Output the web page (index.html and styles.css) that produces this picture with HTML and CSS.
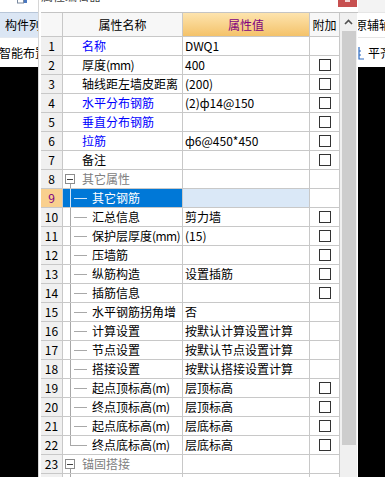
FILE: index.html
```html
<!DOCTYPE html>
<html lang="zh-CN">
<head>
  <meta charset="UTF-8">
  <meta name="viewport" content="width=device-width, initial-scale=1.0">
  <title>属性编辑器</title>
  <link rel="stylesheet" href="styles.css">
</head>
<body>
  <div class="screen">
    <!-- 左侧：主程序的构件列表面板 -->
    <div class="side side-left">
      <div class="strip-top">
        <svg class="mini-ico" width="10" height="4" viewBox="0 0 10 4"><rect x="0.5" y="-3" width="6" height="6" fill="none" stroke="#7a8aa0"/><rect x="7" y="0" width="3" height="3" fill="#4a78c0"/></svg>
      </div>
      <div class="tab">构件列表</div>
      <div class="tool tool-left">智能布置</div>
      <div class="void"></div>
    </div>

    <!-- 属性编辑器 -->
    <div class="dialog">
      <div class="titlebar">
        <span class="title">属性编辑器</span>
        <span class="close"><i></i></span>
      </div>
      <div class="dlg-body">
        <div class="grid">
          <div class="row head">
            <div class="c-no"></div>
            <div class="c-name">属性名称</div>
            <div class="c-val">属性值</div>
            <div class="c-add">附加</div>
          </div>

          <div class="row">
            <div class="c-no">1</div>
            <div class="c-name blue">名称</div>
            <div class="c-val">DWQ1</div>
            <div class="c-add"></div>
          </div>
          <div class="row">
            <div class="c-no">2</div>
            <div class="c-name">厚度<span class="unit">(mm)</span></div>
            <div class="c-val">400</div>
            <div class="c-add"><span class="cb"></span></div>
          </div>
          <div class="row">
            <div class="c-no">3</div>
            <div class="c-name">轴线距左墙皮距离</div>
            <div class="c-val">(200)</div>
            <div class="c-add"><span class="cb"></span></div>
          </div>
          <div class="row">
            <div class="c-no">4</div>
            <div class="c-name blue">水平分布钢筋</div>
            <div class="c-val">(2)ф14@150</div>
            <div class="c-add"><span class="cb"></span></div>
          </div>
          <div class="row">
            <div class="c-no">5</div>
            <div class="c-name blue">垂直分布钢筋</div>
            <div class="c-val"></div>
            <div class="c-add"><span class="cb"></span></div>
          </div>
          <div class="row">
            <div class="c-no">6</div>
            <div class="c-name blue">拉筋</div>
            <div class="c-val">ф6@450*450</div>
            <div class="c-add"><span class="cb"></span></div>
          </div>
          <div class="row">
            <div class="c-no">7</div>
            <div class="c-name">备注</div>
            <div class="c-val"></div>
            <div class="c-add"><span class="cb"></span></div>
          </div>
          <div class="row group">
            <div class="c-no">8</div>
            <div class="c-name"><span class="fold"></span>其它属性</div>
            <div class="c-val"></div>
            <div class="c-add"></div>
          </div>
          <div class="row sel">
            <div class="c-no">9</div>
            <div class="c-name"><span class="twig"></span>其它钢筋</div>
            <div class="c-val"></div>
            <div class="c-add"></div>
          </div>
          <div class="row">
            <div class="c-no">10</div>
            <div class="c-name"><span class="twig"></span>汇总信息</div>
            <div class="c-val">剪力墙</div>
            <div class="c-add"><span class="cb"></span></div>
          </div>
          <div class="row">
            <div class="c-no">11</div>
            <div class="c-name"><span class="twig"></span>保护层厚度<span class="unit">(mm)</span></div>
            <div class="c-val">(15)</div>
            <div class="c-add"><span class="cb"></span></div>
          </div>
          <div class="row">
            <div class="c-no">12</div>
            <div class="c-name"><span class="twig"></span>压墙筋</div>
            <div class="c-val"></div>
            <div class="c-add"><span class="cb"></span></div>
          </div>
          <div class="row">
            <div class="c-no">13</div>
            <div class="c-name"><span class="twig"></span>纵筋构造</div>
            <div class="c-val">设置插筋</div>
            <div class="c-add"><span class="cb"></span></div>
          </div>
          <div class="row">
            <div class="c-no">14</div>
            <div class="c-name"><span class="twig"></span>插筋信息</div>
            <div class="c-val"></div>
            <div class="c-add"><span class="cb"></span></div>
          </div>
          <div class="row">
            <div class="c-no">15</div>
            <div class="c-name"><span class="twig"></span>水平钢筋拐角增</div>
            <div class="c-val">否</div>
            <div class="c-add"></div>
          </div>
          <div class="row">
            <div class="c-no">16</div>
            <div class="c-name"><span class="twig"></span>计算设置</div>
            <div class="c-val">按默认计算设置计算</div>
            <div class="c-add"></div>
          </div>
          <div class="row">
            <div class="c-no">17</div>
            <div class="c-name"><span class="twig"></span>节点设置</div>
            <div class="c-val">按默认节点设置计算</div>
            <div class="c-add"></div>
          </div>
          <div class="row">
            <div class="c-no">18</div>
            <div class="c-name"><span class="twig"></span>搭接设置</div>
            <div class="c-val">按默认搭接设置计算</div>
            <div class="c-add"></div>
          </div>
          <div class="row">
            <div class="c-no">19</div>
            <div class="c-name"><span class="twig"></span>起点顶标高<span class="unit">(m)</span></div>
            <div class="c-val">层顶标高</div>
            <div class="c-add"><span class="cb"></span></div>
          </div>
          <div class="row">
            <div class="c-no">20</div>
            <div class="c-name"><span class="twig"></span>终点顶标高<span class="unit">(m)</span></div>
            <div class="c-val">层顶标高</div>
            <div class="c-add"><span class="cb"></span></div>
          </div>
          <div class="row">
            <div class="c-no">21</div>
            <div class="c-name"><span class="twig"></span>起点底标高<span class="unit">(m)</span></div>
            <div class="c-val">层底标高</div>
            <div class="c-add"><span class="cb"></span></div>
          </div>
          <div class="row">
            <div class="c-no">22</div>
            <div class="c-name"><span class="twig last"></span>终点底标高<span class="unit">(m)</span></div>
            <div class="c-val">层底标高</div>
            <div class="c-add"><span class="cb"></span></div>
          </div>
          <div class="row group">
            <div class="c-no">23</div>
            <div class="c-name"><span class="fold"></span>锚固搭接</div>
            <div class="c-val"></div>
            <div class="c-add"></div>
          </div>
          <div class="row">
            <div class="c-no">24</div>
            <div class="c-name"><span class="twig"></span>混凝土强度等级</div>
            <div class="c-val">(C30)</div>
            <div class="c-add"><span class="cb"></span></div>
          </div>
        </div>

        <div class="vscroll">
          <div class="up">
            <svg width="9" height="6" viewBox="0 0 9 6"><path d="M1 5 L4.5 1.5 L8 5" fill="none" stroke="#505050" stroke-width="1.6"/></svg>
          </div>
          <div class="thumb"></div>
        </div>
      </div>
    </div>

    <!-- 右侧：主程序工具栏 -->
    <div class="side side-right">
      <div class="strip-top strip-gray"></div>
      <div class="tab tab-plain">原辅轴线</div>
      <div class="tool">
        <svg class="ruler" width="6" height="14" viewBox="0 0 6 14"><path d="M1 1 V13 H6 M1 9 H3 M1 5 H3" fill="none" stroke="#2c6ac0" stroke-width="1.2"/></svg>
        <span>平齐板顶</span>
      </div>
      <div class="void"></div>
    </div>
  </div>
</body>
</html>
```

FILE: styles.css
```css
html,
body {
  margin: 0;
  padding: 0;
}
body {
  width: 385px;
  height: 477px;
  overflow: hidden;
  background: #000;
  font-family: "Noto Sans CJK SC", "Noto Sans", sans-serif;
  font-size: 12px;
  color: #000;
}
.screen {
  display: flex;
  height: 477px;
}

/* 两侧被遮住的主窗口 */
.side {
  display: flex;
  flex-direction: column;
  overflow: hidden;
  white-space: nowrap;
}
.side-left {
  width: 38px;
}
.side-right {
  width: 27px;
}
.strip-top {
  height: 12px;
  background: #fff;
  overflow: hidden;
}
.strip-gray {
  background: #f3f3f3;
}
.mini-ico {
  display: block;
  margin-left: 17px;
}
.tab {
  height: 26px;
  box-sizing: border-box;
  line-height: 24px;
  padding-left: 5px;
  background: #dbe6f4;
  border-top: 1px solid #b8c6d8;
  border-bottom: 1px solid #e4e9f0;
}
.tab-plain {
  background: #fff;
  border-top: 1px solid #e6e6e6;
  border-bottom: 1px solid #e6e6e6;
  padding-left: 0;
  text-indent: -3px;
}
.tool {
  display: flex;
  align-items: center;
  height: 29px;
  background: #fff;
}
.tool-left {
  padding-left: 0;
  text-indent: -1px;
}
.ruler {
  flex-shrink: 0;
  margin: 0 4px 0 0;
}
.void {
  flex: 1;
  background: #000;
}

/* 对话框 */
.dialog {
  display: flex;
  flex-direction: column;
  width: 320px;
  box-sizing: border-box;
  padding-left: 2px;
  background: #fff;
  border-left: 1px solid #d6d6d6;
}
.titlebar {
  display: flex;
  justify-content: space-between;
  height: 12px;
  overflow: hidden;
  background: #fff;
}
.title {
  margin-top: -11px;
  line-height: 14px;
  color: #444;
}
.close {
  display: flex;
  justify-content: center;
  width: 19px;
  height: 7px;
  margin-right: 1px;
  background: #c75050;
}
.close i {
  width: 5px;
  height: 2px;
  background: #f3d6d6;
}
.dlg-body {
  display: flex;
  flex: 1;
  border-top: 1px solid #c4c4c4;
  overflow: hidden;
}
.grid {
  width: 299px;
  flex-shrink: 0;
}
.row {
  display: flex;
  height: 19px;
  box-sizing: border-box;
  border-bottom: 1px solid #c8c8c8;
  line-height: 18px;
}
.row > div {
  box-sizing: border-box;
  border-right: 1px solid #c8c8c8;
  white-space: nowrap;
  overflow: hidden;
}
.c-no {
  width: 22px;
  text-align: center;
  background: #f0f0f0;
}
.c-name {
  display: flex;
  align-items: center;
  width: 120px;
  padding-left: 19px;
}
.c-val {
  width: 127px;
  padding-left: 2px;
}
.c-add {
  display: flex;
  align-items: center;
  justify-content: center;
  width: 30px;
}
.blue {
  color: #0000ff;
}
.unit {
  letter-spacing: -0.6px;
}

/* 表头 */
.row.head {
  height: 24px;
  line-height: 23px;
}
.row.head > div {
  background: #f7f7f7;
  justify-content: center;
  padding-left: 0;
  text-align: center;
}
.row.head > .c-val {
  background: linear-gradient(#fde4ae, #f4c26a);
  color: #800080;
}

/* 树形分组 */
.row.group .c-name {
  padding-left: 2px;
  color: #808080;
  background: linear-gradient(#a0a0a0, #a0a0a0) 7px 14px / 1px 4px no-repeat;
}
.fold {
  width: 10px;
  height: 10px;
  box-sizing: border-box;
  margin-right: 7px;
  border: 1px solid #8c8c8c;
  background: linear-gradient(#404040, #404040) center / 6px 1px no-repeat #fff;
  flex-shrink: 0;
}
.row .c-name:has(.twig) {
  padding-left: 7px;
}
.twig {
  flex-shrink: 0;
  width: 17px;
  height: 18px;
  margin-right: 5px;
  background:
    linear-gradient(#a8a8a8, #a8a8a8) 0 0 / 1px 18px no-repeat,
    linear-gradient(#a8a8a8, #a8a8a8) 4px 9px / 13px 1px no-repeat;
}
.twig.last {
  background:
    linear-gradient(#a8a8a8, #a8a8a8) 0 0 / 1px 10px no-repeat,
    linear-gradient(#a8a8a8, #a8a8a8) 0 9px / 17px 1px no-repeat;
}

/* 选中行 */
.row.sel .c-no {
  background: #f9d08e;
  color: #800080;
}
.row.sel .c-name {
  background: #0078d7;
  color: #fff;
}
.row.sel .twig {
  background:
    linear-gradient(#d4e6f8, #d4e6f8) 0 0 / 1px 18px no-repeat,
    linear-gradient(#d4e6f8, #d4e6f8) 4px 9px / 13px 1px no-repeat;
}
.row.sel .c-val {
  background: #dae8f7;
}

.cb {
  width: 12px;
  height: 12px;
  box-sizing: border-box;
  border: 1px solid #333;
  background: #fff;
}

/* 滚动条 */
.vscroll {
  display: flex;
  flex-direction: column;
  width: 17px;
  flex-shrink: 0;
  background: #f0f0f0;
}
.up {
  display: flex;
  align-items: center;
  justify-content: center;
  height: 18px;
}
.thumb {
  height: 414px;
  margin: 0 1px 0 2px;
  background: #cdcdcd;
}
```
